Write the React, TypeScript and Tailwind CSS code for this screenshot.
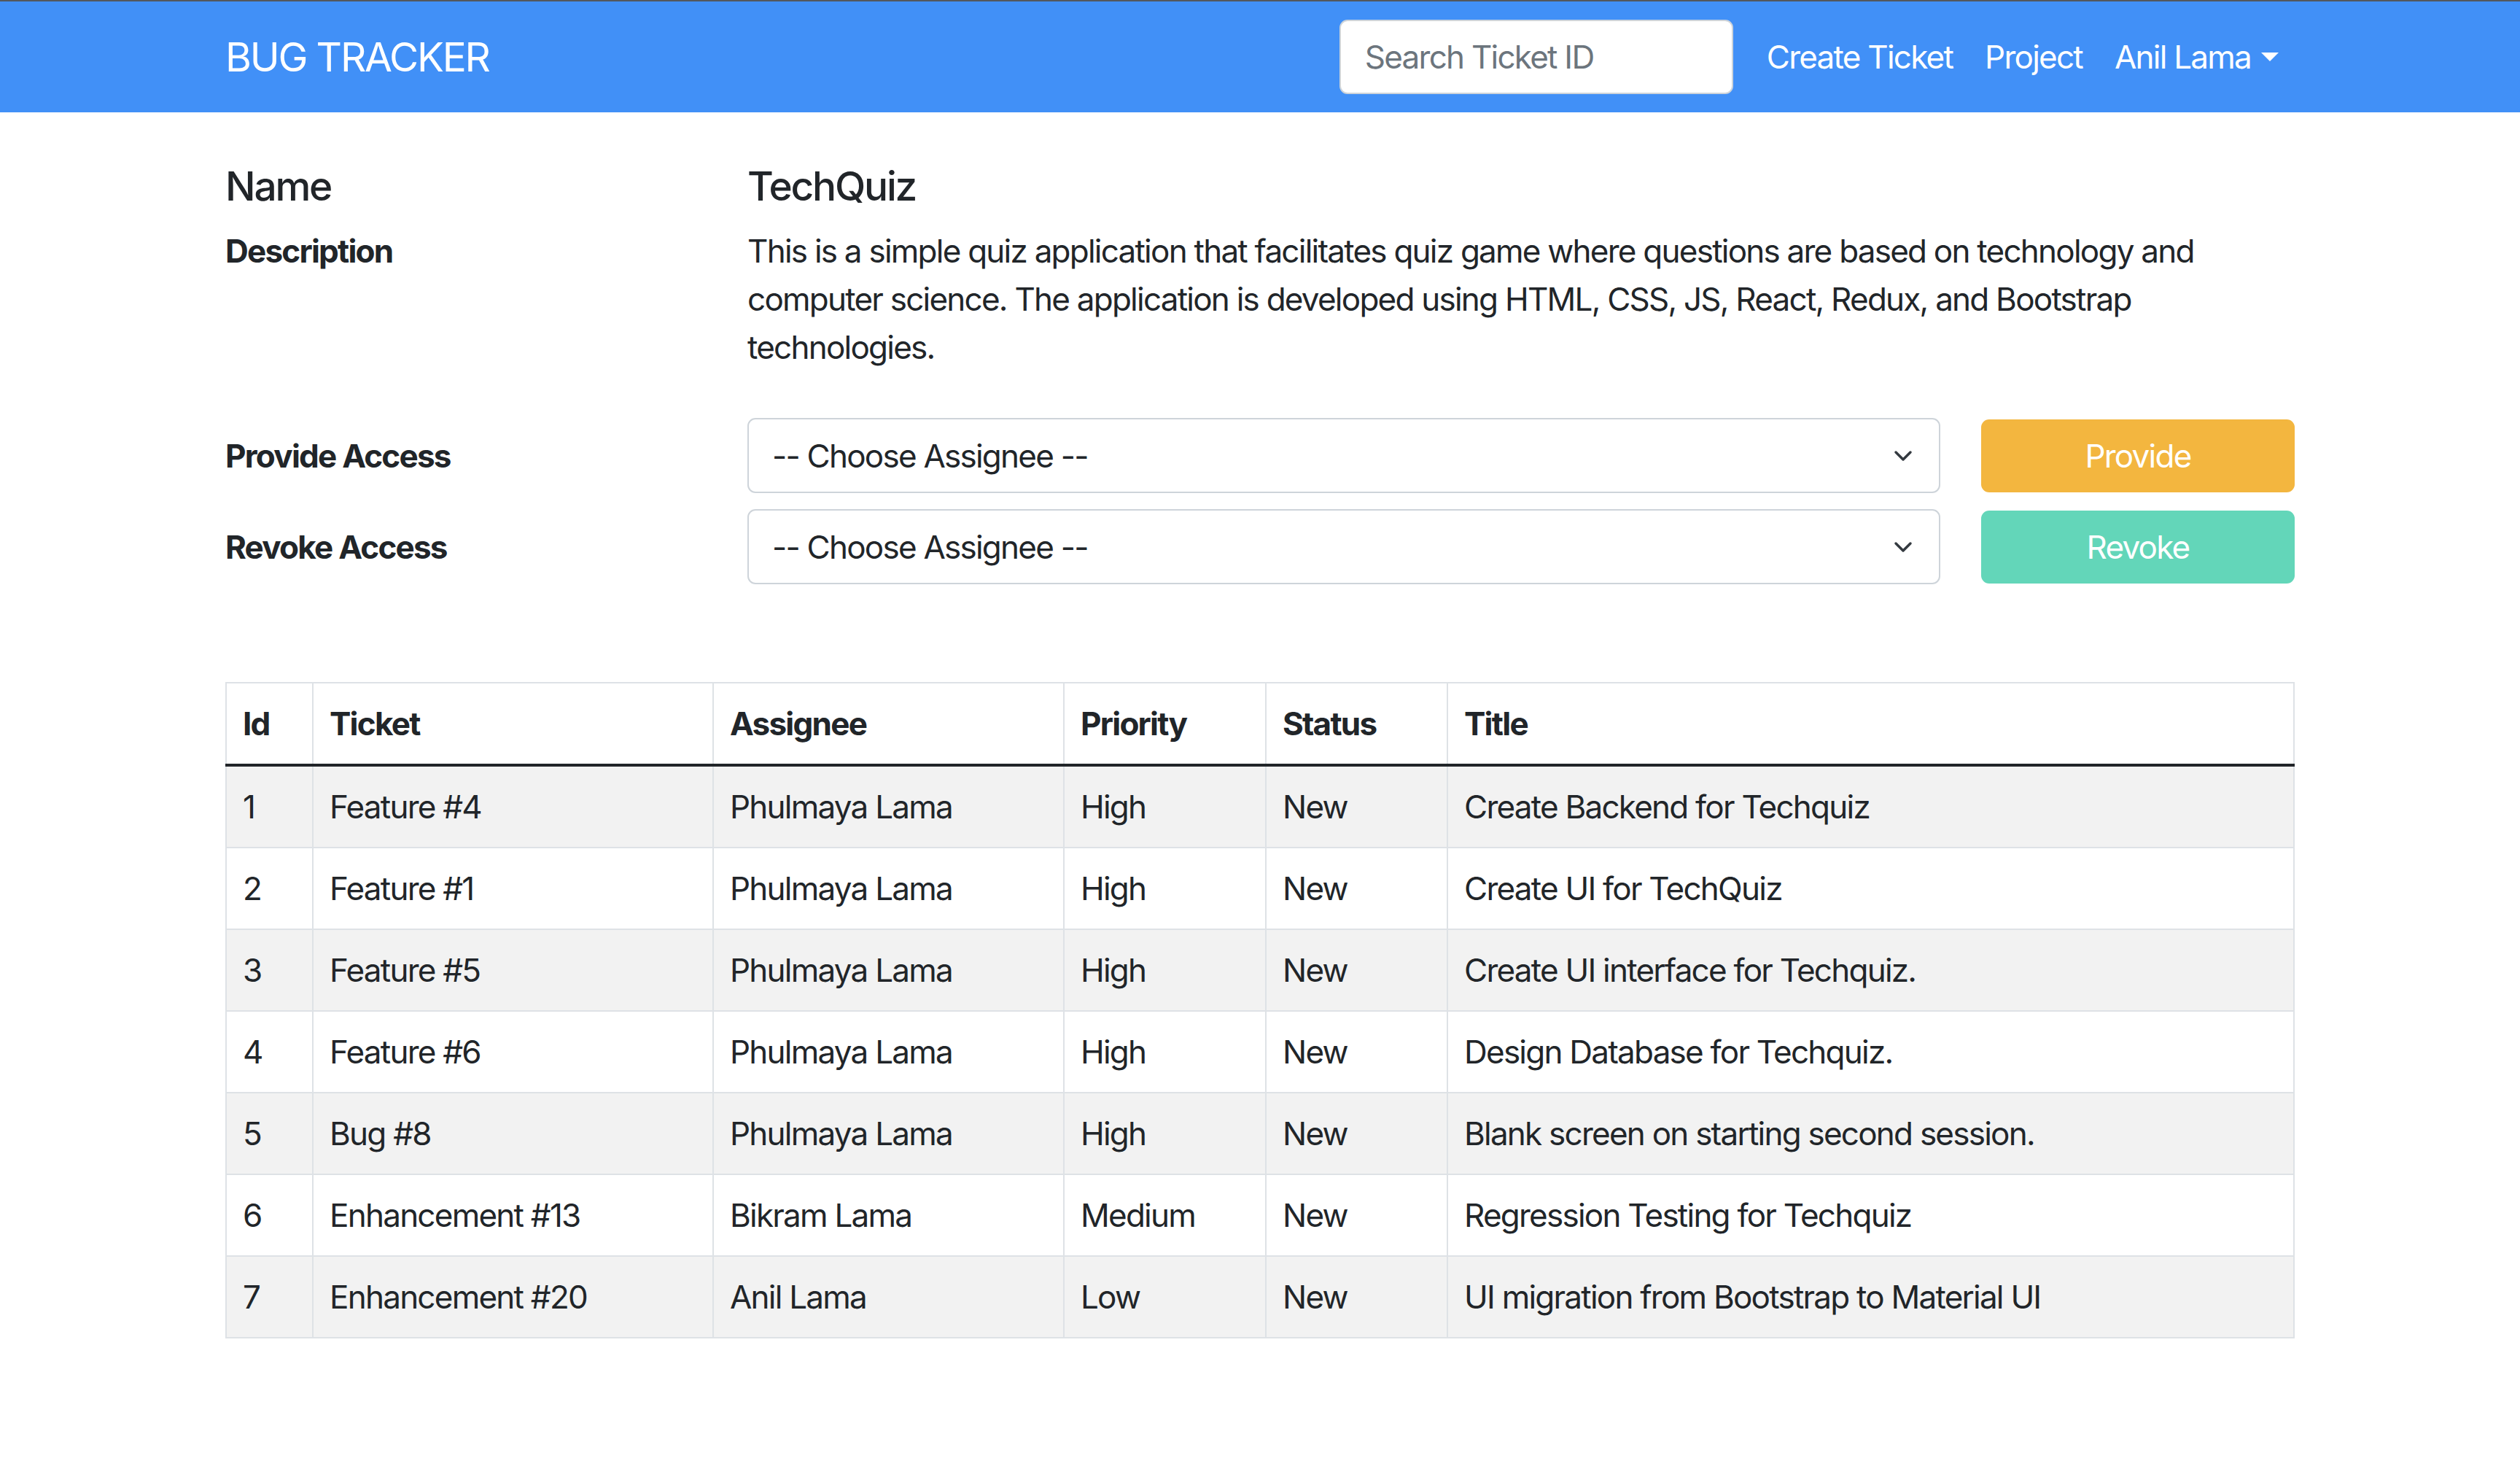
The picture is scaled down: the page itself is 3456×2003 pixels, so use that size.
import React from "react";

const tickets = [
  { id: 1, ticket: "Feature #4", assignee: "Phulmaya Lama", priority: "High", status: "New", title: "Create Backend for Techquiz" },
  { id: 2, ticket: "Feature #1", assignee: "Phulmaya Lama", priority: "High", status: "New", title: "Create UI for TechQuiz" },
  { id: 3, ticket: "Feature #5", assignee: "Phulmaya Lama", priority: "High", status: "New", title: "Create UI interface for Techquiz." },
  { id: 4, ticket: "Feature #6", assignee: "Phulmaya Lama", priority: "High", status: "New", title: "Design Database for Techquiz." },
  { id: 5, ticket: "Bug #8", assignee: "Phulmaya Lama", priority: "High", status: "New", title: "Blank screen on starting second session." },
  { id: 6, ticket: "Enhancement #13", assignee: "Bikram Lama", priority: "Medium", status: "New", title: "Regression Testing for Techquiz" },
  { id: 7, ticket: "Enhancement #20", assignee: "Anil Lama", priority: "Low", status: "New", title: "UI migration from Bootstrap to Material UI" },
];

function Chevron() {
  return (
    <svg width="26" height="16" viewBox="0 0 26 16" fill="none">
      <path d="M3 3l10 10 10-10" stroke="#343a40" strokeWidth="3.5" strokeLinecap="round" strokeLinejoin="round" />
    </svg>
  );
}

function AssigneeSelect() {
  return (
    <div className="flex h-[103px] w-[1636px] items-center justify-between rounded-[11px] border-2 border-[#ced4da] bg-white pl-[32px] pr-[36px]">
      <span>-- Choose Assignee --</span>
      <Chevron />
    </div>
  );
}

export default function App() {
  return (
    <div className="min-h-screen bg-white font-['Inter',sans-serif] text-[44px] leading-[66px] tracking-[-0.04em] text-[#212529]">
      <nav className="h-[154px] border-t-2 border-[#53575d] bg-[#4190f7]">
        <div className="mx-auto flex h-full w-[2838px] items-center justify-between">
          <span className="text-[55px] leading-none tracking-[-0.04em] text-white">BUG TRACKER</span>
          <div className="flex items-center text-white">
            <input
              placeholder="Search Ticket ID"
              className="mr-[24px] h-[102px] w-[540px] rounded-[11px] border-2 border-[#ced4da] bg-white px-[33px] text-[#212529] outline-none placeholder:text-[#6c757d]"
            />
            <a className="px-[22px]">Create Ticket</a>
            <a className="px-[22px]">Project</a>
            <a className="flex items-center px-[22px]">
              Anil Lama
              <span className="ml-[14px] h-0 w-0 border-x-[12px] border-t-[12px] border-x-transparent border-t-white" />
            </a>
          </div>
        </div>
      </nav>

      <main className="mx-auto w-[2838px] pt-[68px] pb-[160px]">
        <div className="grid grid-cols-[716px_1fr] text-[55px] font-medium tracking-[-0.04em]">
          <h5>Name</h5>
          <h5>TechQuiz</h5>
        </div>

        <div className="mt-[23px] grid grid-cols-[716px_1fr]">
          <span className="font-bold">Description</span>
          <p>
            This is a simple quiz application that facilitates quiz game where questions are based on technology and
            computer science. The application is developed using HTML, CSS, JS, React, Redux, and Bootstrap
            technologies.
          </p>
        </div>

        <div className="mt-[64px] grid grid-cols-[716px_1636px_1fr] items-center gap-y-[22px]">
          <span className="font-bold">Provide Access</span>
          <AssigneeSelect />
          <button className="h-[100px] w-[430px] justify-self-end rounded-[11px] bg-[#f3b63f] text-white">Provide</button>
          <span className="font-bold">Revoke Access</span>
          <AssigneeSelect />
          <button className="h-[100px] w-[430px] justify-self-end rounded-[11px] bg-[#63d6b9] text-white">Revoke</button>
        </div>

        <table className="mt-[134px] w-full table-fixed border-collapse text-left">
          <colgroup>
            <col className="w-[119px]" />
            <col className="w-[549px]" />
            <col className="w-[481px]" />
            <col className="w-[277px]" />
            <col className="w-[249px]" />
            <col />
          </colgroup>
          <thead>
            <tr>
              {["Id", "Ticket", "Assignee", "Priority", "Status", "Title"].map((h) => (
                <th key={h} className="border-2 border-b-4 border-[#dee2e6] border-b-[#212529] px-[22px] py-[22px] font-bold">
                  {h}
                </th>
              ))}
            </tr>
          </thead>
          <tbody>
            {tickets.map((t, i) => (
              <tr key={t.id} className={i % 2 === 0 ? "bg-[#f2f2f2]" : "bg-white"}>
                <td className="border-2 border-[#dee2e6] px-[22px] py-[22px]">{t.id}</td>
                <td className="border-2 border-[#dee2e6] px-[22px] py-[22px]">{t.ticket}</td>
                <td className="border-2 border-[#dee2e6] px-[22px] py-[22px]">{t.assignee}</td>
                <td className="border-2 border-[#dee2e6] px-[22px] py-[22px]">{t.priority}</td>
                <td className="border-2 border-[#dee2e6] px-[22px] py-[22px]">{t.status}</td>
                <td className="border-2 border-[#dee2e6] px-[22px] py-[22px]">{t.title}</td>
              </tr>
            ))}
          </tbody>
        </table>
      </main>
    </div>
  );
}
